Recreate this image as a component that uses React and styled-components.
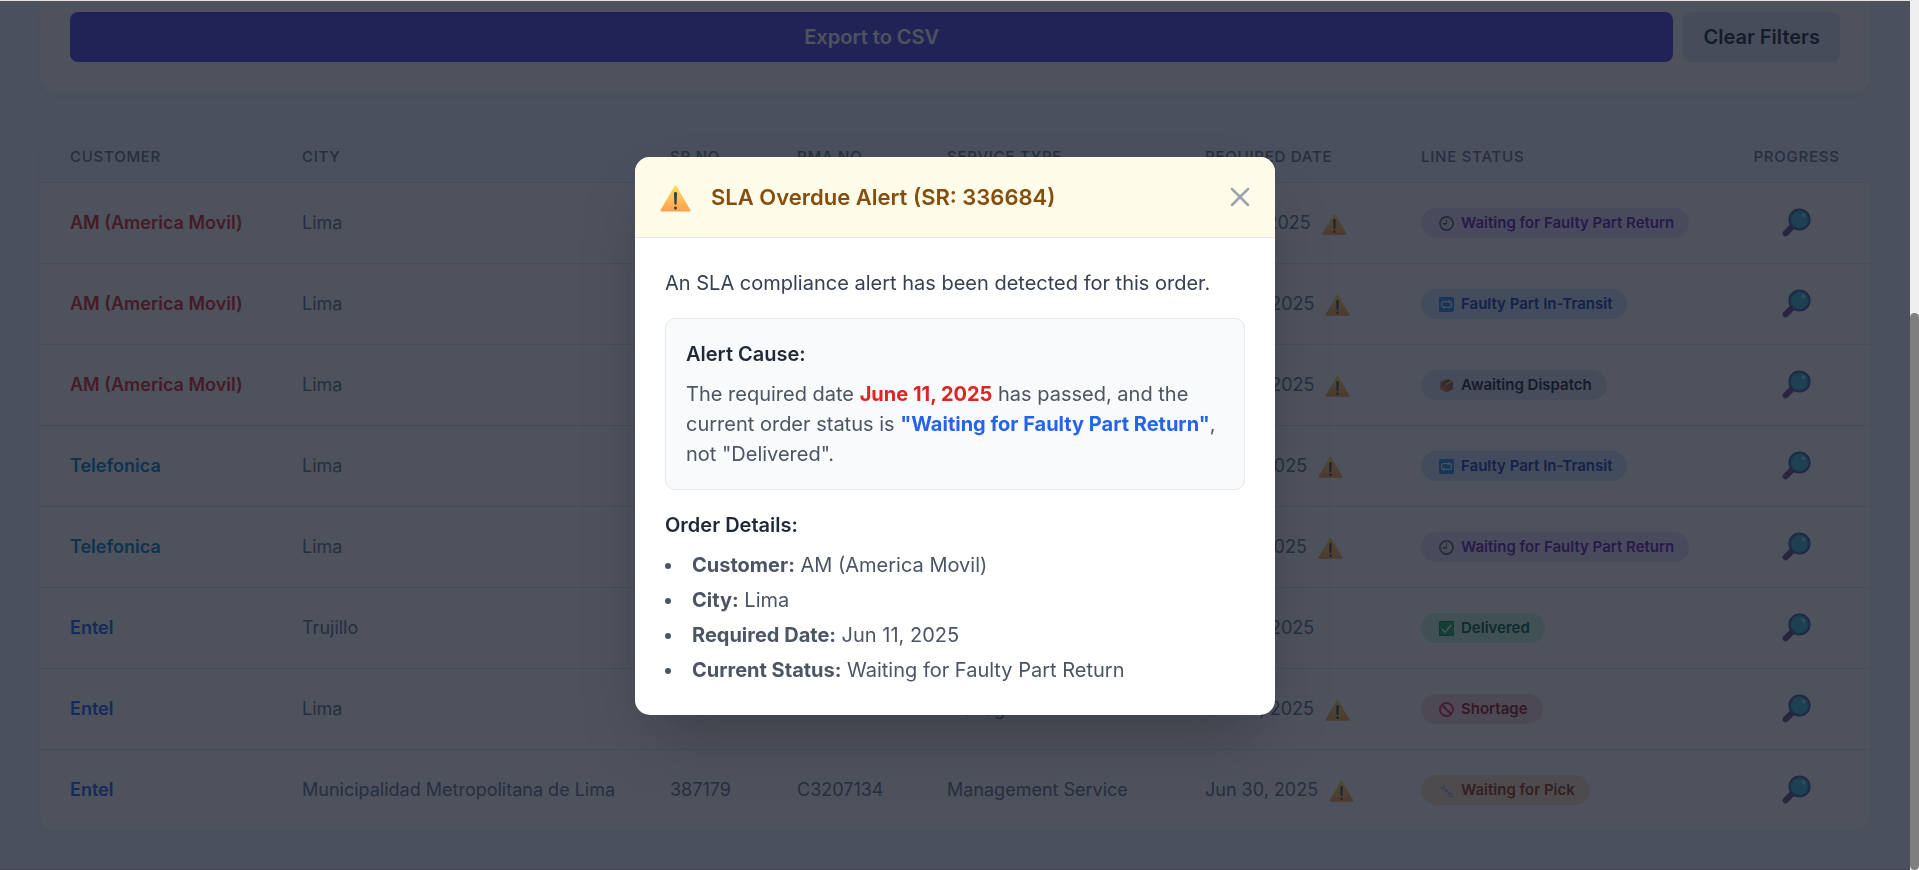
import React, { useState } from "react";
import styled, { createGlobalStyle, css } from "styled-components";

const GlobalStyle = createGlobalStyle`
  * {
    box-sizing: border-box;
  }

  body {
    margin: 0;
    font-family: Inter, "Liberation Sans", sans-serif;
    font-size: 20px;
    line-height: 30px;
    color: #1f2937;
    background-color: #f1f5f9;
  }

  button {
    font-family: inherit;
    cursor: pointer;
  }
`;

const Shell = styled.div`
  display: flex;
  min-height: 100vh;
`;

const Page = styled.main`
  flex: 1;
  min-width: 0;
  padding: 0 40px 39px;
  border-top: 1px solid #e6e1da;
  border-bottom: 1px solid #d9c6d2;
  background-color: #f1f5f9;
`;

const ScrollTrack = styled.div`
  display: flex;
  align-items: flex-end;
  width: 9px;
  background-color: #efefef;
`;

const ScrollThumb = styled.div`
  width: 100%;
  height: 64%;
  border-radius: 5px;
  background-color: #7f7f7f;
`;

const FilterCard = styled.section`
  display: flex;
  gap: 10px;
  padding: 11px 30px 30px;
  margin-bottom: 40px;
  border-radius: 0 0 15px 15px;
  background-color: white;
  box-shadow: 0 5px 8px -1px rgba(0, 0, 0, 0.02);
`;

const FilterButton = styled.button`
  height: 50px;
  padding: 0 20px;
  border: none;
  border-radius: 8px;
  font-size: 20px;
  font-weight: 600;
  color: #1f2937;
  background-color: #e2e8f0;

  ${(props) =>
    props.$primary &&
    css`
      flex: 1;
      color: white;
      background-color: #4f46e5;
    `}
`;

const TableCard = styled.section`
  overflow: hidden;
  border-radius: 15px;
  background-color: white;
  box-shadow: 0 5px 8px -1px rgba(0, 0, 0, 0.02);
`;

const OrdersTable = styled.table`
  width: 100%;
  table-layout: fixed;
  border-collapse: separate;
  border-spacing: 0;
  text-align: left;
`;

const Col = styled.col`
  width: ${(props) => props.$width}px;
`;

const HeadCell = styled.th`
  padding: 15px 30px;
  border-bottom: 1px solid #e2e8f0;
  font-size: 15px;
  line-height: 20px;
  font-weight: 500;
  letter-spacing: 0.05em;
  text-transform: uppercase;
  text-align: ${(props) => (props.$center ? "center" : "left")};
  white-space: nowrap;
  color: #64748b;
  background-color: #f3f7fa;
`;

const Row = styled.tr`
  &:not(:last-child) td {
    height: 81px;
    border-bottom: 1px solid #e2e8f0;
  }
`;

const Cell = styled.td`
  height: 80px;
  padding: 0 30px;
  font-size: 18px;
  line-height: 24px;
  text-align: ${(props) => (props.$center ? "center" : "left")};
  white-space: nowrap;
  color: #64748b;
`;

const customerColors = {
  "AM (America Movil)": "#dc2626",
  Telefonica: "#0284c7",
  Entel: "#2563eb",
};

const Customer = styled.span`
  font-weight: 600;
  color: ${(props) => customerColors[props.$name]};
`;

const DateBox = styled.div`
  display: flex;
  align-items: center;
  gap: 11px;
`;

const badgeTones = {
  purple: css`
    color: #6b21a8;
    background-color: #f0e2ff;
  `,
  blue: css`
    color: #1e40af;
    background-color: #d3e5fe;
  `,
  gray: css`
    color: #1f2937;
    background-color: #e2e8f0;
  `,
  green: css`
    color: #065f46;
    background-color: #cdf7df;
  `,
  red: css`
    color: #991b1b;
    background-color: #fedcdc;
  `,
  orange: css`
    color: #9a3412;
    background-color: #ffe4c4;
  `,
};

const Badge = styled.span`
  display: inline-flex;
  align-items: center;
  gap: 7px;
  height: 30px;
  padding: 0 15px 0 18px;
  border-radius: 15px;
  font-size: 15px;
  line-height: 20px;
  font-weight: 600;
  vertical-align: middle;
  ${(props) => badgeTones[props.$tone]}
`;

const IconButton = styled.button`
  display: inline-flex;
  padding: 0;
  border: none;
  vertical-align: middle;
  background: none;
`;

const Overlay = styled.div`
  position: fixed;
  inset: 1px 9px 0 0;
  display: flex;
  align-items: center;
  justify-content: center;
  background-color: rgba(17, 24, 39, 0.75);
`;

const Modal = styled.div`
  width: 100%;
  max-width: 640px;
  overflow: hidden;
  border-radius: 15px;
  background-color: white;
  box-shadow: 0 31px 62px -15px rgba(0, 0, 0, 0.25);
`;

const ModalHeader = styled.header`
  display: flex;
  align-items: center;
  gap: 20px;
  height: 81px;
  padding: 0 25px;
  border-bottom: 1px solid #e5e7eb;
  background-color: #fefce8;
`;

const ModalTitle = styled.h3`
  flex: 1;
  margin: 0;
  font-size: 22px;
  line-height: 36px;
  font-weight: 600;
  color: #854d0e;
`;

const ModalBody = styled.div`
  display: flex;
  flex-direction: column;
  gap: 20px;
  padding: 30px;
  color: #4b5563;
`;

const Intro = styled.p`
  margin: 0;
  color: #374151;
`;

const CauseBox = styled.div`
  padding: 20px;
  border: 1px solid #e5e7eb;
  border-radius: 10px;
  background-color: #f9fafb;
`;

const SubTitle = styled.h4`
  margin: 0 0 10px;
  font-size: 20px;
  font-weight: 600;
  color: #1f2937;
`;

const CauseText = styled.p`
  margin: 0;
`;

const Highlight = styled.strong`
  font-weight: 700;
  color: ${(props) => (props.$danger ? "#dc2626" : "#2563eb")};
`;

const DetailList = styled.ul`
  display: flex;
  flex-direction: column;
  gap: 5px;
  margin: 0;
  padding: 0;
  list-style: disc inside;
`;

const WarningIcon = ({ width, height }) => (
  <svg width={width} height={height} viewBox="0 -3 31 30" aria-hidden="true">
    <defs>
      <linearGradient id="warn" x1="0" y1="0" x2="0" y2="1">
        <stop offset="0" stopColor="#ffdc4a" />
        <stop offset="0.5" stopColor="#ffc158" />
        <stop offset="1" stopColor="#fca04c" />
      </linearGradient>
    </defs>
    <path
      d="M14.4 1.2Q15.5 -0.4 16.6 1.2L30.4 25Q31 26.6 29.4 26.6H1.6Q0 26.6 0.6 25Z"
      fill="url(#warn)"
    />
    <path
      d="M14 8.4Q14 7 15.5 7T17 8.4L16.6 18.8Q16.4 19.8 15.5 19.8T14.4 18.8Z"
      fill="#3b3d4d"
    />
    <circle cx="15.5" cy="23" r="1.5" fill="#3b3d4d" />
  </svg>
);

const MagnifierIcon = () => (
  <svg width="30" height="30" viewBox="0 0 30 30" aria-hidden="true">
    <path d="M10 18.8L3.6 25.4" stroke="#7a4a8a" strokeWidth="6" strokeLinecap="round" />
    <path d="M12.5 15L8.5 20" stroke="#5a4a86" strokeWidth="3" />
    <circle cx="17.5" cy="11.5" r="10.2" fill="#42b8d8" stroke="#4f5196" strokeWidth="1.8" />
    <circle cx="17.5" cy="11.5" r="8.6" fill="none" stroke="#3097c4" strokeWidth="1.2" />
    <ellipse cx="21.5" cy="7.4" rx="1.6" ry="2.1" fill="#a8e6f5" transform="rotate(-35 21.5 7.4)" />
  </svg>
);

const CloseIcon = () => (
  <svg width="20" height="20" viewBox="0 0 20 20" fill="none" aria-hidden="true">
    <path d="M2 2L18 18M18 2L2 18" stroke="#9ca3af" strokeWidth="2.5" strokeLinecap="round" />
  </svg>
);

const badgeShapes = {
  clock: (
    <>
      <circle cx="7.5" cy="7.5" r="6.6" fill="#e4e6ea" stroke="#5d6066" strokeWidth="1.6" />
      <path d="M7.5 3V7.5" stroke="#e0304a" strokeWidth="1" />
      <path d="M7.8 7.9H4" stroke="#30343c" strokeWidth="1.2" />
    </>
  ),
  transit: (
    <>
      <rect width="15" height="15" rx="1.5" fill="#2f8fe8" />
      <rect
        x="2.6"
        y="4.6"
        width="9.8"
        height="5.8"
        rx="2"
        fill="none"
        stroke="#eef6ff"
        strokeWidth="1.3"
      />
      <path d="M9.6 2.6L12 4.6L9.6 6.6ZM5.4 8.4L3 10.4L5.4 12.4Z" fill="#eef6ff" />
    </>
  ),
  box: (
    <>
      <path d="M7.5 0.4L14 3.6V11L7.5 14.6L1 11V3.6Z" fill="#c98559" />
      <path d="M7.5 7L14 3.6V11L7.5 14.6Z" fill="#b26b45" />
      <path d="M7.5 0.4L14 3.6L7.5 7L1 3.6Z" fill="#dba57b" />
      <path d="M9.6 1.4L3.4 4.8V7.8L5.4 8.8V5.8L11.8 2.5Z" fill="#7d5140" />
    </>
  ),
  check: (
    <>
      <rect width="15" height="15" rx="1" fill="#1fb462" />
      <rect x="0.5" y="0.5" width="14" height="14" rx="1" fill="none" stroke="#159050" />
      <path
        d="M3 8.2L6 11.2L12 4.2"
        fill="none"
        stroke="#f4fff8"
        strokeWidth="1.5"
        strokeLinecap="round"
      />
    </>
  ),
  banned: (
    <>
      <circle cx="7.5" cy="7.5" r="6.5" fill="none" stroke="#e8264f" strokeWidth="1.9" />
      <path d="M3 3L12 12" stroke="#e8264f" strokeWidth="1.9" />
    </>
  ),
  wrench: (
    <>
      <path d="M4.4 4.6L11 11.4" stroke="#b9bce0" strokeWidth="2.2" />
      <path
        d="M4 0.8Q6.6 2 6 4.6Q5.2 6.6 3 6.2Q1 5.6 1 3.2L2.8 4.2L4.4 3Z"
        fill="#b9bce0"
      />
      <circle cx="11.8" cy="12" r="1.8" fill="none" stroke="#b9bce0" strokeWidth="1.6" />
    </>
  ),
};

const statuses = {
  "Waiting for Faulty Part Return": { tone: "purple", icon: "clock" },
  "Faulty Part In-Transit": { tone: "blue", icon: "transit" },
  "Awaiting Dispatch": { tone: "gray", icon: "box" },
  Delivered: { tone: "green", icon: "check" },
  Shortage: { tone: "red", icon: "banned" },
  "Waiting for Pick": { tone: "orange", icon: "wrench" },
};

const StatusBadge = ({ status }) => (
  <Badge $tone={statuses[status].tone}>
    <svg width="15" height="15" viewBox="0 0 15 15" aria-hidden="true">
      {badgeShapes[statuses[status].icon]}
    </svg>
    {status}
  </Badge>
);

const columns = [
  { label: "Customer", width: 232 },
  { label: "City", width: 368 },
  { label: "SR No", width: 127 },
  { label: "RMA No", width: 150 },
  { label: "Service Type", width: 258 },
  { label: "Required Date", width: 216 },
  { label: "Line Status", width: 332 },
  { label: "Progress", width: 147, center: true },
];

const orders = [
  {
    customer: "AM (America Movil)",
    city: "Lima",
    sr: "336684",
    rma: "C3206871",
    date: "Jun 11, 2025",
    status: "Waiting for Faulty Part Return",
    overdue: true,
  },
  {
    customer: "AM (America Movil)",
    city: "Lima",
    sr: "361207",
    rma: "C3206902",
    date: "Jun 12, 2025",
    status: "Faulty Part In-Transit",
    overdue: true,
  },
  {
    customer: "AM (America Movil)",
    city: "Lima",
    sr: "361945",
    rma: "C3206948",
    date: "Jun 12, 2025",
    status: "Awaiting Dispatch",
    overdue: true,
  },
  {
    customer: "Telefonica",
    city: "Lima",
    sr: "372518",
    rma: "C3207013",
    date: "Jun 2, 2025",
    status: "Faulty Part In-Transit",
    overdue: true,
  },
  {
    customer: "Telefonica",
    city: "Lima",
    sr: "374460",
    rma: "C3207029",
    date: "Jun 3, 2025",
    status: "Waiting for Faulty Part Return",
    overdue: true,
  },
  {
    customer: "Entel",
    city: "Trujillo",
    sr: "380352",
    rma: "C3207066",
    date: "Jun 13, 2025",
    status: "Delivered",
    overdue: false,
  },
  {
    customer: "Entel",
    city: "Lima",
    sr: "385023",
    rma: "C3207108",
    date: "Jun 16, 2025",
    status: "Shortage",
    overdue: true,
  },
  {
    customer: "Entel",
    city: "Municipalidad Metropolitana de Lima",
    sr: "387179",
    rma: "C3207134",
    date: "Jun 30, 2025",
    status: "Waiting for Pick",
    overdue: true,
  },
];

const OrderRow = ({ order, onAlert }) => (
  <Row>
    <Cell>
      <Customer $name={order.customer}>{order.customer}</Customer>
    </Cell>
    <Cell>{order.city}</Cell>
    <Cell>{order.sr}</Cell>
    <Cell>{order.rma}</Cell>
    <Cell>Management Service</Cell>
    <Cell>
      <DateBox>
        {order.date}
        {order.overdue && (
          <IconButton aria-label="Show SLA alert" onClick={() => onAlert(order)}>
            <WarningIcon width={25} height={24} />
          </IconButton>
        )}
      </DateBox>
    </Cell>
    <Cell>
      <StatusBadge status={order.status} />
    </Cell>
    <Cell $center>
      <IconButton aria-label="View progress">
        <MagnifierIcon />
      </IconButton>
    </Cell>
  </Row>
);

const AlertModal = ({ order, onClose }) => (
  <Overlay>
    <Modal role="dialog" aria-modal="true" aria-labelledby="alert-title">
      <ModalHeader>
        <WarningIcon width={31} height={30} />
        <ModalTitle id="alert-title">SLA Overdue Alert (SR: {order.sr})</ModalTitle>
        <IconButton aria-label="Close" onClick={onClose}>
          <CloseIcon />
        </IconButton>
      </ModalHeader>
      <ModalBody>
        <Intro>An SLA compliance alert has been detected for this order.</Intro>
        <CauseBox>
          <SubTitle>Alert Cause:</SubTitle>
          <CauseText>
            The required date <Highlight $danger>{order.date.replace("Jun", "June")}</Highlight> has
            passed, and the current order status is <Highlight>"{order.status}"</Highlight>, not
            "Delivered".
          </CauseText>
        </CauseBox>
        <div>
          <SubTitle>Order Details:</SubTitle>
          <DetailList>
            <li>
              <strong>Customer:</strong> {order.customer}
            </li>
            <li>
              <strong>City:</strong> {order.city}
            </li>
            <li>
              <strong>Required Date:</strong> {order.date}
            </li>
            <li>
              <strong>Current Status:</strong> {order.status}
            </li>
          </DetailList>
        </div>
      </ModalBody>
    </Modal>
  </Overlay>
);

const App = () => {
  const [alertOrder, setAlertOrder] = useState(orders[0]);

  return (
    <>
      <GlobalStyle />
      <Shell>
        <Page>
          <FilterCard>
            <FilterButton $primary>Export to CSV</FilterButton>
            <FilterButton>Clear Filters</FilterButton>
          </FilterCard>
          <TableCard>
            <OrdersTable>
              <colgroup>
                {columns.map((column) => (
                  <Col key={column.label} $width={column.width} />
                ))}
              </colgroup>
              <thead>
                <tr>
                  {columns.map((column) => (
                    <HeadCell key={column.label} $center={column.center}>
                      {column.label}
                    </HeadCell>
                  ))}
                </tr>
              </thead>
              <tbody>
                {orders.map((order) => (
                  <OrderRow key={order.sr} order={order} onAlert={setAlertOrder} />
                ))}
              </tbody>
            </OrdersTable>
          </TableCard>
        </Page>
        <ScrollTrack>
          <ScrollThumb />
        </ScrollTrack>
      </Shell>
      {alertOrder && <AlertModal order={alertOrder} onClose={() => setAlertOrder(null)} />}
    </>
  );
};

export default App;
